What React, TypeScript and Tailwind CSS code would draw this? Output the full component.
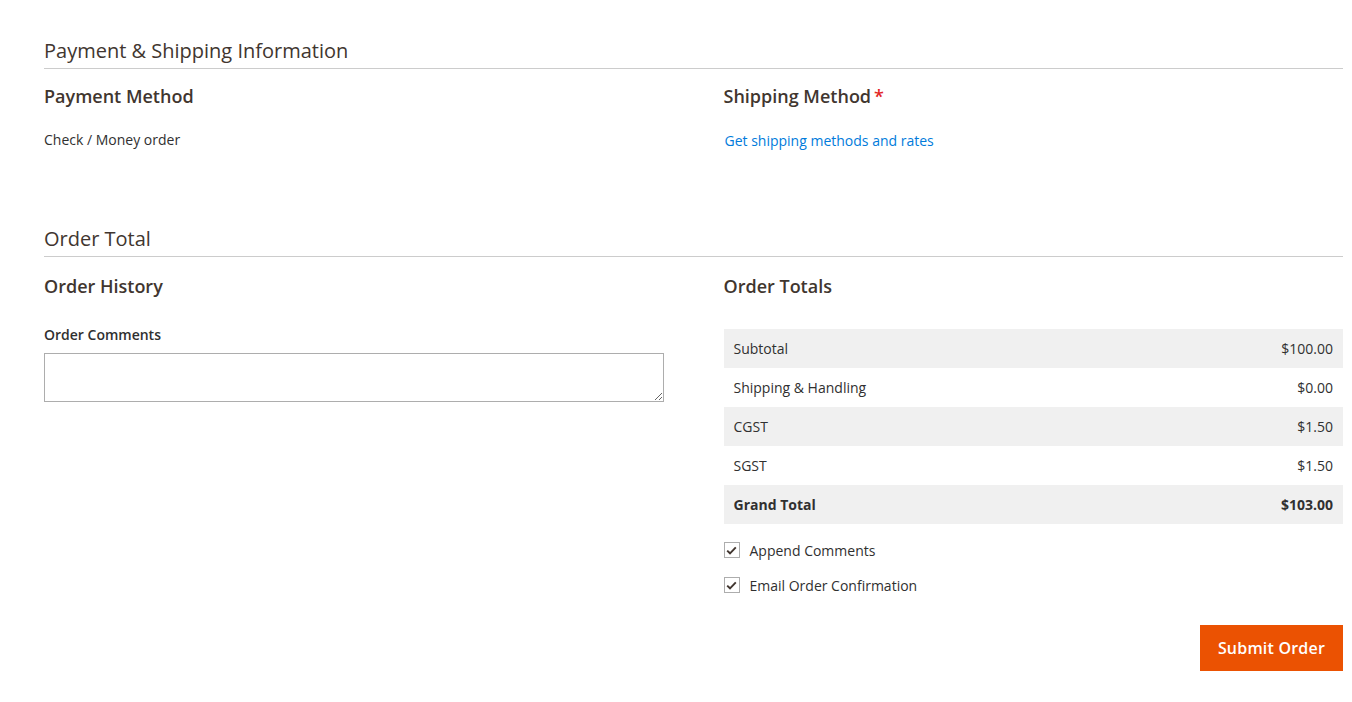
import React from 'react';

const font = { fontFamily: '"Open Sans", "Liberation Sans", sans-serif' };

function SectionTitle({ children }: { children: React.ReactNode }) {
  return (
    <div className="border-b border-[#cccccc] pb-[3px]">
      <h2 className="text-[20px] leading-[28px] font-normal text-[#41362f]">{children}</h2>
    </div>
  );
}

function Checkbox({ label }: { label: string }) {
  return (
    <label className="flex items-center h-[16px]">
      <span className="w-[16px] h-[16px] border border-[#adadad] bg-white flex items-center justify-center">
        <svg width="11" height="9" viewBox="0 0 11 9" fill="none">
          <path d="M1.2 4.6 L4 7.3 L9.8 1.3" stroke="#41362f" strokeWidth="1.9" />
        </svg>
      </span>
      <span className="ml-[10px] text-[14px] text-[#303030]">{label}</span>
    </label>
  );
}

export default function App() {
  const totals = [
    { label: 'Subtotal', value: '$100.00' },
    { label: 'Shipping & Handling', value: '$0.00' },
    { label: 'CGST', value: '$1.50' },
    { label: 'SGST', value: '$1.50' },
  ];

  return (
    <div className="bg-white min-h-[702px] pl-[44px] pr-[9px] pt-[37px] text-[#303030]" style={font}>
      {/* Payment & Shipping */}
      <SectionTitle>Payment &amp; Shipping Information</SectionTitle>
      <div className="grid grid-cols-2 gap-[60px] mt-[15px]">
        <div>
          <h3 className="text-[18px] leading-[25px] font-semibold text-[#41362f]">Payment Method</h3>
          <div className="mt-[21px] text-[14px] leading-[20px]">Check / Money order</div>
        </div>
        <div>
          <h3 className="text-[18px] leading-[25px] font-semibold text-[#41362f]">
            Shipping Method<span className="text-[#e22626] ml-[3px]">*</span>
          </h3>
          <a className="block mt-[22px] ml-[1px] text-[14px] leading-[20px] text-[#007bdb]" href="#">
            Get shipping methods and rates
          </a>
        </div>
      </div>

      {/* Order Total */}
      <div className="mt-[74px]">
        <SectionTitle>Order Total</SectionTitle>
      </div>
      <div className="grid grid-cols-2 gap-[60px] mt-[17px]">
        <div>
          <h3 className="text-[18px] leading-[25px] font-semibold text-[#41362f]">Order History</h3>
          <div className="mt-[26px] text-[14px] leading-[20px] font-semibold text-[#303030]">Order Comments</div>
          <textarea className="block mt-[8px] w-full h-[49px] border border-[#adadad] bg-white resize-y" />
        </div>
        <div>
          <h3 className="text-[18px] leading-[25px] font-semibold text-[#41362f]">Order Totals</h3>
          <div className="mt-[30px]">
            {totals.map((t, i) => (
              <div
                key={t.label}
                className={`flex justify-between items-center h-[39px] px-[10px] text-[14px] ${i % 2 === 0 ? 'bg-[#f0f0f0]' : 'bg-white'}`}
              >
                <span>{t.label}</span>
                <span>{t.value}</span>
              </div>
            ))}
            <div className="flex justify-between items-center h-[39px] px-[10px] text-[14px] font-bold bg-[#f0f0f0]">
              <span>Grand Total</span>
              <span>$103.00</span>
            </div>
          </div>
          <div className="mt-[18px] flex flex-col gap-[19px]">
            <Checkbox label="Append Comments" />
            <Checkbox label="Email Order Confirmation" />
          </div>
          <div className="flex justify-end mt-[32px]">
            <button className="bg-[#eb5202] text-white text-[16px] font-semibold h-[46px] px-[18px] tracking-[0.2px] leading-[44px]">
              Submit Order
            </button>
          </div>
        </div>
      </div>
    </div>
  );
}
